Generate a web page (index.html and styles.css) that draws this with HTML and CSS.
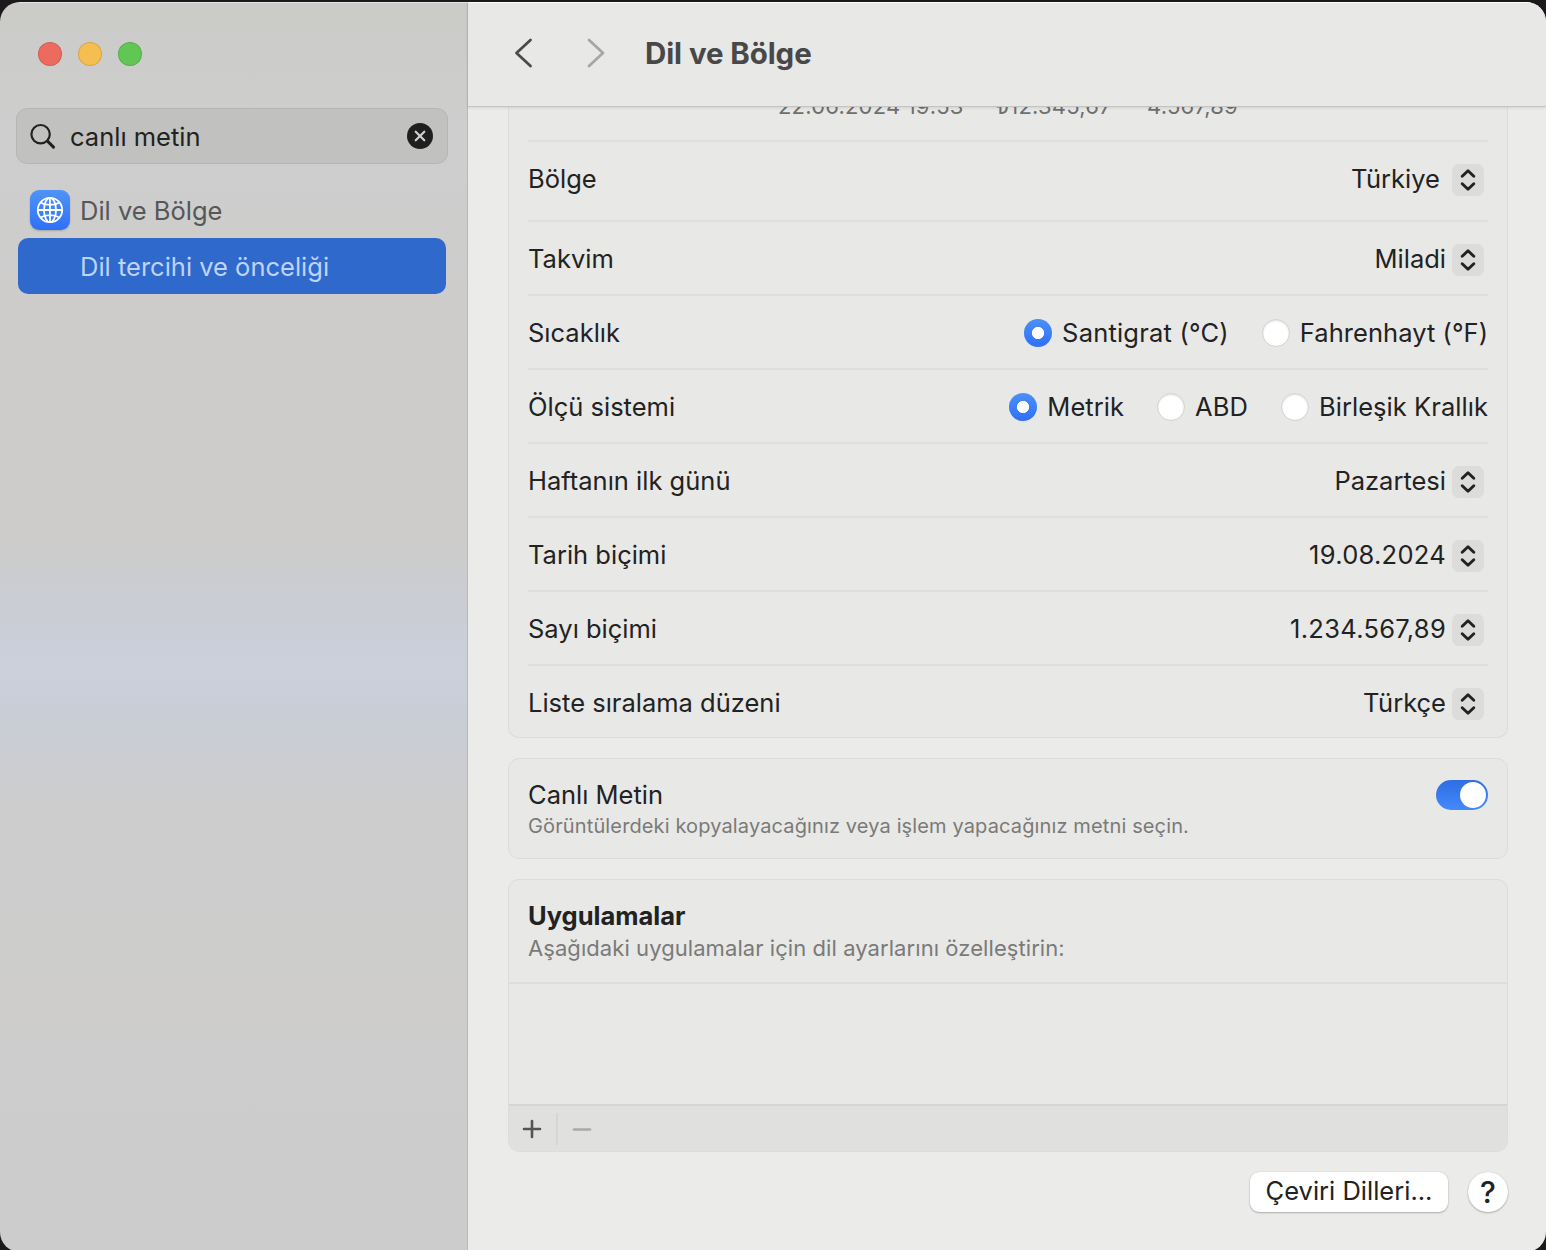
FILE: index.html
```html
<!DOCTYPE html>
<html lang="tr">
<head>
  <meta charset="UTF-8">
  <title>Dil ve Bölge</title>
  <link rel="stylesheet" href="styles.css">
</head>
<body>
  <svg class="symbols" width="0" height="0">
    <symbol id="stepper" viewBox="0 0 32 32">
      <path d="M10.2 12.3l5.8-5.6 5.8 5.6M10.2 19.7l5.8 5.6 5.8-5.6" fill="none" stroke="#222" stroke-width="2.9" stroke-linecap="round" stroke-linejoin="round"/>
    </symbol>
  </svg>

  <div class="window">
    <aside class="sidebar">
      <div class="lights">
        <span class="light red"></span>
        <span class="light yellow"></span>
        <span class="light green"></span>
      </div>

      <div class="search">
        <svg class="search-icon" viewBox="0 0 28 28" fill="none" stroke="#222" stroke-linecap="round">
          <circle cx="11.6" cy="12.2" r="9.2" stroke-width="2.2"/>
          <path d="M18.5 19.1l6 6" stroke-width="3"/>
        </svg>
        <span class="search-text">canlı metin</span>
        <svg class="clear-icon" viewBox="0 0 26 26">
          <circle cx="13" cy="13" r="13" fill="#1f1f1f"/>
          <path d="M8.7 8.7l8.6 8.6M17.3 8.7l-8.6 8.6" stroke="#d0d0ce" stroke-width="2.2" stroke-linecap="round"/>
        </svg>
      </div>

      <div class="result">
        <span class="app-icon">
          <svg viewBox="0 0 28 28" fill="none" stroke="#fff" stroke-width="1.8">
            <circle cx="14" cy="14" r="12.2"/>
            <ellipse cx="14" cy="14" rx="6" ry="12.2"/>
            <path d="M14 1.8v24.4M1.8 14h24.4M4.6 6.4c5 3.4 13.8 3.4 18.8 0M4.6 21.6c5-3.4 13.8-3.4 18.8 0"/>
          </svg>
        </span>
        <span class="result-text">Dil ve Bölge</span>
      </div>
      <div class="result selected"><span class="selected-text">Dil tercihi ve önceliği</span></div>
    </aside>

    <main class="content">
      <header class="toolbar">
        <svg class="nav" viewBox="0 0 20 30"><path d="M16.5 2L2.5 15l14 13" stroke="#4b4b4b"/></svg>
        <svg class="nav forward" viewBox="0 0 20 30"><path d="M3 2l14 13L3 28" stroke="#a6a6a6"/></svg>
        <h1>Dil ve Bölge</h1>
      </header>

      <div class="scroll">
        <section class="card settings">
          <div class="sample">
            <span class="sample-date">22.06.2024 19:53</span>
            <span class="sample-money">₺12.345,67</span>
            <span class="sample-number">4.567,89</span>
          </div>
          <div class="row tall">
            <span class="label">Bölge</span>
            <span class="value region">Türkiye</span>
            <svg class="stepper"><use href="#stepper"/></svg>
          </div>
          <div class="row">
            <span class="label">Takvim</span>
            <span class="value">Miladi</span>
            <svg class="stepper"><use href="#stepper"/></svg>
          </div>
          <div class="row">
            <span class="label">Sıcaklık</span>
            <span class="radio on"></span><span class="option degree">Santigrat (°C)</span>
            <span class="radio"></span><span class="option">Fahrenhayt (°F)</span>
          </div>
          <div class="row">
            <span class="label">Ölçü sistemi</span>
            <span class="radio on"></span><span class="option">Metrik</span>
            <span class="radio"></span><span class="option">ABD</span>
            <span class="radio"></span><span class="option">Birleşik Krallık</span>
          </div>
          <div class="row">
            <span class="label">Haftanın ilk günü</span>
            <span class="value">Pazartesi</span>
            <svg class="stepper"><use href="#stepper"/></svg>
          </div>
          <div class="row">
            <span class="label">Tarih biçimi</span>
            <span class="value number">19.08.2024</span>
            <svg class="stepper"><use href="#stepper"/></svg>
          </div>
          <div class="row">
            <span class="label">Sayı biçimi</span>
            <span class="value number">1.234.567,89</span>
            <svg class="stepper"><use href="#stepper"/></svg>
          </div>
          <div class="row">
            <span class="label">Liste sıralama düzeni</span>
            <span class="value">Türkçe</span>
            <svg class="stepper"><use href="#stepper"/></svg>
          </div>
        </section>

        <section class="card live-text">
          <div class="live-info">
            <div class="live-title">Canlı Metin</div>
            <div class="live-desc">Görüntülerdeki kopyalayacağınız veya işlem yapacağınız metni seçin.</div>
          </div>
          <span class="switch"></span>
        </section>

        <section class="card apps">
          <div class="apps-head">
            <h2>Uygulamalar</h2>
            <div class="apps-desc">Aşağıdaki uygulamalar için dil ayarlarını özelleştirin:</div>
          </div>
          <div class="apps-list"></div>
          <div class="apps-bar">
            <svg class="bar-icon" viewBox="0 0 20 20"><path d="M10 2v16M2 10h16" stroke="#555"/></svg>
            <span class="bar-divider"></span>
            <svg class="bar-icon" viewBox="0 0 20 20"><path d="M2 10.5h16" stroke="#a9a9a9"/></svg>
          </div>
        </section>

        <div class="buttons">
          <button class="translate">Çeviri Dilleri...</button>
          <button class="help">?</button>
        </div>
      </div>
    </main>
  </div>
</body>
</html>
```

FILE: styles.css
```css
* {
  box-sizing: border-box;
}

body {
  margin: 0;
  padding-top: 2px;
  height: 1250px;
  background: #1b1919;
  font-family: Inter, "Liberation Sans", sans-serif;
  font-size: 25.5px;
  line-height: 32px;
  color: #222;
  overflow: hidden;
}

.symbols {
  display: block;
}

.window {
  display: flex;
  height: 1250px;
  border-radius: 20px;
  overflow: hidden;
}

/* sidebar */
.sidebar {
  width: 468px;
  padding: 39px 20px 0 16px;
  background: linear-gradient(#cbcbc8 0, #cecece 140px, #cdcccb 330px, #cdcccb 540px, #cacdd4 610px, #cbd0dc 670px, #c9cdd6 710px, #cdcdce 800px, #cecdcc 1000px, #cccccc 100%);
  border-right: 1px solid #b9b9b7;
  border-top: 1px solid #e6e6e4;
}

.lights {
  display: flex;
  gap: 16px;
  padding-left: 22px;
  margin-bottom: 42px;
}

.light {
  width: 24px;
  height: 24px;
  border-radius: 50%;
  border: 1px solid rgba(0, 0, 0, 0.12);
}

.red { background: #ed6a5f; }
.yellow { background: #f6be50; }
.green { background: #62c655; }

.search {
  display: flex;
  align-items: center;
  width: 432px;
  height: 56px;
  padding: 0 14px 0 12px;
  background: #c1c1bf;
  border: 1px solid #b5b5b3;
  border-radius: 11px;
}

.search-icon {
  width: 28px;
  height: 28px;
  margin-right: 13px;
}

.search-text {
  flex: 1;
  padding-top: 2px;
}

.clear-icon {
  width: 26px;
  height: 26px;
}

.result {
  display: flex;
  align-items: center;
  height: 56px;
  margin: 18px 0 0 2px;
  padding-left: 12px;
  color: #575757;
}

.result-text {
  padding-top: 2px;
}

.app-icon {
  display: flex;
  align-items: center;
  justify-content: center;
  width: 40px;
  height: 40px;
  margin-right: 10px;
  border-radius: 9px;
  background: linear-gradient(#4f94f8, #2f70f6);
  box-shadow: 0 1px 2px rgba(0, 0, 0, 0.2);
}

.app-icon svg {
  width: 28px;
  height: 28px;
}

.result.selected {
  width: 428px;
  margin-top: 0;
  padding: 2px 0 0 62px;
  border-radius: 10px;
  background: #3069cc;
  color: #bfd3f6;
}

/* right side */
.content {
  flex: 1;
  display: flex;
  flex-direction: column;
  background: #ebebe9;
}

.toolbar {
  display: flex;
  align-items: center;
  height: 105px;
  padding: 0 0 3px 46px;
  background: #e8e8e7;
  border-top: 1px solid #fff;
  border-bottom: 1px solid #c4c4c3;
  box-shadow: 0 1px 3px rgba(0, 0, 0, 0.1);
  z-index: 1;
}

.nav {
  width: 20px;
  height: 30px;
  fill: none;
  stroke-width: 2.8;
  stroke-linecap: round;
  stroke-linejoin: round;
}

.forward {
  margin: 0 39px 0 52px;
}

h1 {
  margin: 0;
  font-size: 29.5px;
  font-weight: 650;
  letter-spacing: -0.1px;
  color: #484848;
}

.scroll {
  flex: 1;
  display: flex;
  flex-direction: column;
  padding: 0 38px 0 40px;
}

.card {
  background: #e8e8e6;
  border: 1px solid #dcdcda;
  border-radius: 11px;
}

.settings {
  height: 631px;
  padding: 0 19px;
  border-top: 0;
  border-top-left-radius: 0;
  border-top-right-radius: 0;
}

.sample {
  display: flex;
  height: 34px;
  margin-top: -1px;
  padding-left: 250px;
  font-size: 22px;
  letter-spacing: 0.2px;
  line-height: 0;
  color: #6f6f6e;
}

.sample-date {
  width: 218px;
}

.sample-money {
  width: 151px;
}

.row {
  display: flex;
  align-items: center;
  height: 74px;
  padding-top: 2px;
  border-top: 2px solid #dfdfdd;
}

.row.tall {
  height: 80px;
  padding: 0 0 4px;
}

.label {
  flex: 1;
}

.value {
  margin-right: 6px;
}

.number {
  letter-spacing: 0.28px;
}

.region {
  margin-right: 12px;
}

.stepper {
  width: 32px;
  height: 32px;
  margin: 2px 4px 0 0;
  border-radius: 7px;
  background: #dcdcda;
}

.option {
  letter-spacing: 0.05px;
}

.degree {
  letter-spacing: 0.2px;
}

.radio {
  width: 28px;
  height: 28px;
  margin: 0 10px 0 33px;
  border-radius: 50%;
  background: #fff;
  border: 1px solid #d2d2d0;
  box-shadow: inset 0 1px 2px rgba(0, 0, 0, 0.12);
}

.radio.on {
  border: 0;
  background: radial-gradient(circle, #fff 5.8px, transparent 6.4px), linear-gradient(#4b8ff8, #2f70f6);
  box-shadow: none;
}

.live-text {
  display: flex;
  justify-content: space-between;
  height: 101px;
  margin-top: 20px;
  padding: 20px 19px 0;
}

.live-desc {
  font-size: 20px;
  line-height: 30px;
  letter-spacing: 0.13px;
  color: #7a7a79;
}

.switch {
  display: flex;
  justify-content: flex-end;
  width: 52px;
  height: 30px;
  margin-top: 1px;
  padding: 2px;
  border-radius: 15px;
  background: linear-gradient(#2f6de4, #438afa);
}

.switch::after {
  content: "";
  width: 26px;
  height: 26px;
  border-radius: 50%;
  background: #fff;
}

.apps {
  height: 273px;
  margin-top: 20px;
}

.apps-head {
  height: 102px;
  padding: 20px 19px 0;
}

h2 {
  margin: 0;
  font-size: 25.5px;
  font-weight: 650;
}

.apps-desc {
  font-size: 22px;
  letter-spacing: 0.07px;
  color: #7a7a79;
}

.apps-list {
  height: 122px;
  border-top: 2px solid #dededc;
}

.apps-bar {
  display: flex;
  align-items: center;
  height: 47px;
  padding-left: 13px;
  border-top: 2px solid #d5d5d3;
  border-radius: 0 0 10px 10px;
  background: #e0e0de;
}

.bar-icon {
  width: 20px;
  height: 20px;
  stroke-width: 2.6;
  stroke-linecap: round;
}

.bar-divider {
  width: 2px;
  height: 32px;
  margin: 0 14px;
  background: #d5d5d3;
}

.buttons {
  display: flex;
  justify-content: flex-end;
  gap: 20px;
  margin-top: 20px;
}

button {
  height: 40px;
  padding: 0;
  border: 0;
  background: #fff;
  color: #222;
  font-family: inherit;
  font-size: 25.5px;
  box-shadow: 0 1px 2px rgba(0, 0, 0, 0.25), 0 0 1px rgba(0, 0, 0, 0.2);
}

.translate {
  width: 198px;
  padding-bottom: 4px;
  border-radius: 9px;
}

.help {
  width: 40px;
  border-radius: 50%;
  font-size: 30px;
  font-weight: 500;
}
```
